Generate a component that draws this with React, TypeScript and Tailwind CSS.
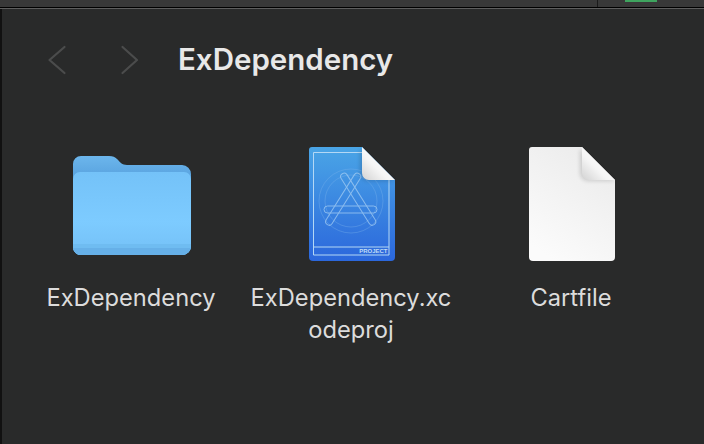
import React from "react";

const FolderIcon = () => (
  <svg width="120" height="102" viewBox="0 0 120 102" fill="none" className="mt-[3px]">
    <defs>
      <linearGradient id="folderBack" x1="0" y1="0" x2="0" y2="1">
        <stop offset="0" stopColor="#6cb6ec" />
        <stop offset="0.2" stopColor="#5aa4e0" />
      </linearGradient>
      <linearGradient id="folderFront" x1="0" y1="0" x2="0" y2="1">
        <stop offset="0" stopColor="#74c2f8" />
        <stop offset="0.6" stopColor="#7dcbff" />
        <stop offset="1" stopColor="#74c0f6" />
      </linearGradient>
    </defs>
    <path
      d="M1 9a8 8 0 0 1 8-8h28c4 0 6 1 8 3 3 3 5 6 10 6h55a9 9 0 0 1 9 9v72a9 9 0 0 1-9 9H9a8 8 0 0 1-8-8z"
      fill="url(#folderBack)"
    />
    <path
      d="M1 24a7 7 0 0 1 7-7h104a7 7 0 0 1 7 7v67a9 9 0 0 1-9 9H9a8 8 0 0 1-8-8z"
      fill="url(#folderFront)"
    />
    <path d="M1 89h118v2a9 9 0 0 1-9 9H9a8 8 0 0 1-8-8z" fill="#6fbcf1" />
    <path d="M1 93h118a9 9 0 0 1-9 7H9a8 8 0 0 1-8-7z" fill="#66b0e8" />
  </svg>
);

const PageFold = ({ id }: { id: string }) => (
  <>
    <defs>
      <linearGradient id={id} x1="0" y1="1" x2="1" y2="0">
        <stop offset="0" stopColor="#d2d2d2" />
        <stop offset="0.4" stopColor="#f6f6f6" />
        <stop offset="1" stopColor="#ffffff" />
      </linearGradient>
      <filter id={`${id}Blur`} x="-30%" y="-30%" width="160%" height="160%">
        <feGaussianBlur stdDeviation="2" />
      </filter>
    </defs>
    <path d="M52 3v24a8 8 0 0 0 8 8h27z" fill="#000000" opacity="0.15" filter={`url(#${id}Blur)`} />
    <path d="M54 1l33 33H61a7 7 0 0 1-7-7z" fill={`url(#${id})`} />
  </>
);

const ProjectIcon = () => (
  <svg width="88" height="116" viewBox="0 0 88 116" fill="none">
    <defs>
      <linearGradient id="projectBg" x1="0" y1="0" x2="0" y2="1">
        <stop offset="0" stopColor="#4aa5e6" />
        <stop offset="1" stopColor="#2b67dc" />
      </linearGradient>
    </defs>
    <path
      d="M4 1h50l33 33v77a4 4 0 0 1-4 4H5a4 4 0 0 1-4-4V4a3 3 0 0 1 3-3z"
      fill="url(#projectBg)"
    />
    <path
      d="M54 6.500H5.500v102.500h75.500V34M5.500 101h75.500"
      stroke="#b4d8f5"
      strokeWidth="1"
    />
    <circle cx="43" cy="55" r="32" stroke="#7fb5ec" strokeWidth="0.7" opacity="0.5" />
    <circle cx="43" cy="55" r="26" stroke="#7fb5ec" strokeWidth="0.7" opacity="0.5" />
    <g stroke="#a4cdf3" strokeWidth="1" opacity="0.75">
      <rect x="16" y="60" width="53" height="7" rx="3.500" />
      <rect x="-3.500" y="-30" width="7" height="60" rx="3.500" transform="translate(35.200 53.200) rotate(32)" />
      <rect x="-3.500" y="-30" width="7" height="60" rx="3.500" transform="translate(50.200 53.200) rotate(-32)" />
    </g>
    <text
      x="79.500"
      y="107"
      textAnchor="end"
      fontSize="6"
      fontWeight="700"
      fill="#c0dcf6"
      style={{ fontFamily: "'Liberation Sans', sans-serif" }}
    >
      PROJECT
    </text>
    <PageFold id="foldBlue" />
  </svg>
);

const FileIcon = () => (
  <svg width="88" height="116" viewBox="0 0 88 116" fill="none">
    <defs>
      <linearGradient id="paper" x1="0.8" y1="0" x2="0.3" y2="1">
        <stop offset="0" stopColor="#ebebeb" />
        <stop offset="1" stopColor="#fbfbfb" />
      </linearGradient>
    </defs>
    <path
      d="M4 1h50l33 33v77a4 4 0 0 1-4 4H5a4 4 0 0 1-4-4V4a3 3 0 0 1 3-3z"
      fill="url(#paper)"
    />
    <PageFold id="foldPlain" />
  </svg>
);

const items = [
  { label: "ExDependency", icon: <FolderIcon /> },
  { label: "ExDependency.xcodeproj", icon: <ProjectIcon /> },
  { label: "Cartfile", icon: <FileIcon /> },
];

export default function App() {
  return (
    <div className="w-[704px] h-[444px] overflow-hidden flex flex-col bg-[#292a2a] font-['Inter',sans-serif]">
      {/* strip of the window above */}
      <div className="h-[7px] bg-[#383838] flex justify-end">
        <div className="w-[107px] border-l border-[#1a1a1a] pl-[27px]">
          <div className="w-[32px] h-[2px] bg-[#3fa45f]" />
        </div>
      </div>
      <div className="flex-1 flex flex-col border-t border-black">
        <div className="h-px bg-[#5e5e5e]" />
        <div className="flex-1 border-l-2 border-[#111111]">
          <div className="h-[102px] flex items-center pl-[45px]">
            <svg width="20" height="30" viewBox="0 0 20 30" fill="none" className="mr-[53px]">
              <path d="M17.500 2L2.500 15l15 13" stroke="#4b4c4c" strokeWidth="2.200" strokeLinecap="round" strokeLinejoin="round" />
            </svg>
            <svg width="20" height="30" viewBox="0 0 20 30" fill="none" className="mr-[38px]">
              <path d="M2.500 2L17 15 2.500 28" stroke="#4b4c4c" strokeWidth="2.200" strokeLinecap="round" strokeLinejoin="round" />
            </svg>
            <h1 className="text-[29.5px] font-semibold text-[#e8e8e8] leading-none">ExDependency</h1>
          </div>
          <div className="grid grid-cols-[220px_220px_220px] pl-[20px] pt-[35px]">
            {items.map((item) => (
              <div key={item.label} className="flex flex-col items-center">
                <div className="h-[116px] flex items-center justify-center">{item.icon}</div>
                <div className="mt-[20px] mr-[2px] w-[206px] text-center text-[23.7px] leading-[32px] text-[#dcdcdc] break-all">
                  {item.label}
                </div>
              </div>
            ))}
          </div>
        </div>
      </div>
    </div>
  );
}
